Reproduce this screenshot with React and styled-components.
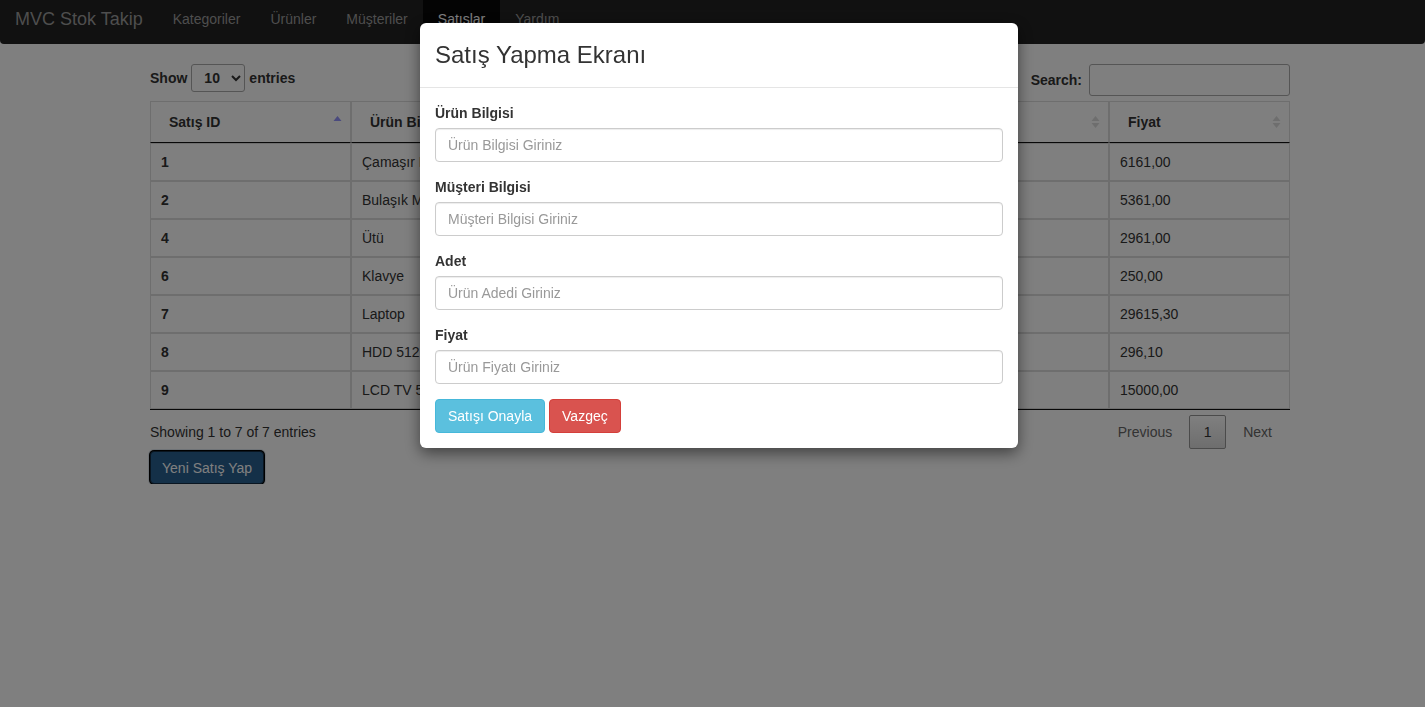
import React from "react";
import styled, {createGlobalStyle} from "styled-components";

const GlobalStyle = createGlobalStyle`
  * { box-sizing: border-box; }
  body {
    margin: 0;
    font-family: "Liberation Sans", Arial, sans-serif;
    font-size: 14px;
    line-height: 20px;
    color: #333;
    background: #fff;
  }
`;

const rows = [
  { id: 1, urun: "Çamaşır Makinesi", musteri: "Ahmet Yılmaz", adet: 1, fiyat: "6161,00" },
  { id: 2, urun: "Bulaşık Makinesi", musteri: "Mehmet Demir", adet: 1, fiyat: "5361,00" },
  { id: 4, urun: "Ütü", musteri: "Ayşe Kaya", adet: 1, fiyat: "2961,00" },
  { id: 6, urun: "Klavye", musteri: "Ali Çelik", adet: 1, fiyat: "250,00" },
  { id: 7, urun: "Laptop", musteri: "Zeynep Şahin", adet: 1, fiyat: "29615,30" },
  { id: 8, urun: "HDD 512 GB", musteri: "Can Öztürk", adet: 1, fiyat: "296,10" },
  { id: 9, urun: "LCD TV 55 inç", musteri: "Elif Aydın", adet: 1, fiyat: "15000,00" },
];

const columns = [
  { title: "Satış ID", width: 201, sort: "asc" },
  { title: "Ürün Bilgisi", width: 262, sort: "both" },
  { title: "Müşteri", width: 250, sort: "both" },
  { title: "Adet", width: 246, sort: "both" },
  { title: "Fiyat", width: 181, sort: "both" },
];

// Navbar
const Navbar = styled.nav`
  height: 44px;
  background: #222;
  border-radius: 0 0 4px 4px;
  display: flex;
  align-items: stretch;
  padding-left: 15px;
`;

const Brand = styled.a`
  font-size: 18px;
  color: #9d9d9d;
  display: flex;
  align-items: center;
  margin-right: 15px;
  padding-bottom: 6px;
`;

const NavLink = styled.a`
  color: ${(p) => (p.$active ? "#fff" : "#9d9d9d")};
  background: ${(p) => (p.$active ? "#080808" : "transparent")};
  padding: 0 15px 6px;
  display: flex;
  align-items: center;
`;

// Page body
const Main = styled.main`
  width: 1140px;
  margin-left: 150px;
  padding-top: 20px;
`;

const TopBar = styled.div`
  display: flex;
  justify-content: space-between;
  align-items: flex-start;
  height: 37px;
  font-weight: bold;
`;

const Label = styled.label`
  display: flex;
  align-items: center;
  gap: 4px;
`;

const Select = styled.select`
  width: 54px;
  height: 28px;
  font-family: inherit;
  font-size: 14px;
  font-weight: bold;
  padding: 0 4px 0 8px;
  border: 1px solid #aaa;
  border-radius: 3px;
  background: #fff;
  color: #333;
`;

const SearchInput = styled.input`
  width: 201px;
  height: 32px;
  border: 1px solid #aaa;
  border-radius: 3px;
  margin-left: 3px;
`;

const Table = styled.table`
  width: 1140px;
  table-layout: fixed;
  border-collapse: separate;
  border-spacing: 0;
  border-bottom: 1px solid #111;
`;

const Th = styled.th`
  text-align: left;
  padding: 10px 30px 10px 18px;
  border: 1px solid #ddd;
  border-bottom: 1px solid #111;
  position: relative;
  white-space: nowrap;
  overflow: hidden;
`;

const SortIcon = styled.svg`
  position: absolute;
  right: 8px;
  top: 13px;
`;

const Td = styled.td`
  padding: 8px 10px;
  border: 1px solid #ddd;
  font-weight: ${(p) => (p.$bold ? "bold" : "normal")};
  white-space: nowrap;
  overflow: hidden;
`;

const Footer = styled.div`
  display: flex;
  justify-content: space-between;
  align-items: center;
  margin-top: 4px;
`;

const Pager = styled.div`
  display: flex;
  align-items: center;
  padding-right: 1px;
`;

const PageLink = styled.a`
  color: ${(p) => (p.$current ? "#333" : "#666")};
  border: 1px solid ${(p) => (p.$current ? "#979797" : "transparent")};
  border-radius: 2px;
  background: ${(p) => (p.$current ? "linear-gradient(#fff, #dcdcdc)" : "transparent")};
  text-align: center;
  width: ${(p) => (p.$current ? "37px" : "auto")};
  padding: ${(p) => (p.$current ? "6px 0" : "7px 16px")};
`;

const NewButton = styled.button`
  margin-top: 1px;
  font-family: inherit;
  font-size: 14px;
  color: #fff;
  background: #286090;
  border: 1px solid #122b40;
  border-radius: 4px;
  padding: 6px 11px;
  height: 33px;
  box-shadow: 0 0 0 1px #000, 0 0 0 2px #dfe6ee;
`;

// Modal
const Backdrop = styled.div`
  position: fixed;
  inset: 0;
  background: rgba(0, 0, 0, 0.5);
`;

const Modal = styled.div`
  position: fixed;
  top: 23px;
  left: 420px;
  width: 598px;
  background: #fff;
  border-radius: 6px;
  box-shadow: 0 5px 15px rgba(0, 0, 0, 0.5);
`;

const ModalHeader = styled.div`
  padding: 15px;
  height: 65px;
  border-bottom: 1px solid #e5e5e5;
  display: flex;
  align-items: center;
`;

const ModalTitle = styled.h3`
  margin: 0;
  font-size: 24px;
  font-weight: 500;
  line-height: 1.1;
  color: #333;
`;

const ModalBody = styled.div`
  padding: 15px;
`;

const FormGroup = styled.div`
  margin-bottom: 15px;
`;

const FieldLabel = styled.label`
  display: block;
  font-weight: bold;
  margin-bottom: 5px;
`;

const Input = styled.input`
  display: block;
  width: 100%;
  height: 34px;
  padding: 6px 12px;
  font-family: inherit;
  font-size: 14px;
  border: 1px solid #ccc;
  border-radius: 4px;
  box-shadow: inset 0 1px 1px rgba(0, 0, 0, 0.075);
  &::placeholder { color: #999; }
`;

const Btn = styled.button`
  font-family: inherit;
  font-size: 14px;
  color: #fff;
  height: 34px;
  padding: 6px 12px;
  border-radius: 4px;
  border: 1px solid ${(p) => (p.$variant === "danger" ? "#d43f3a" : "#46b8da")};
  background: ${(p) => (p.$variant === "danger" ? "#d9534f" : "#5bc0de")};
  margin-right: 4px;
`;

const Sort = ({ type }) =>
  type === "asc" ? (
    <SortIcon width="9" height="14" viewBox="0 0 9 14">
      <path d="M0.5 6 L4.5 1 L8.5 6 Z" fill="#9494fc" />
    </SortIcon>
  ) : (
    <SortIcon width="9" height="14" viewBox="0 0 9 14">
      <path d="M0.5 6 L4.5 1 L8.5 6 Z" fill="#dcdcdc" />
      <path d="M0.5 8 L4.5 13 L8.5 8 Z" fill="#dcdcdc" />
    </SortIcon>
  );

const fields = [
  { label: "Ürün Bilgisi", ph: "Ürün Bilgisi Giriniz" },
  { label: "Müşteri Bilgisi", ph: "Müşteri Bilgisi Giriniz" },
  { label: "Adet", ph: "Ürün Adedi Giriniz" },
  { label: "Fiyat", ph: "Ürün Fiyatı Giriniz" },
];

export default function App() {
  return (
    <>
      <GlobalStyle />
      <Navbar>
        <Brand>MVC Stok Takip</Brand>
        <NavLink>Kategoriler</NavLink>
        <NavLink>Ürünler</NavLink>
        <NavLink>Müşteriler</NavLink>
        <NavLink $active>Satışlar</NavLink>
        <NavLink>Yardım</NavLink>
      </Navbar>
      <Main>
        <TopBar>
          <Label>
            Show
            <Select defaultValue="10">
              <option>10</option>
              <option>25</option>
              <option>50</option>
            </Select>
            entries
          </Label>
          <Label>
            Search:
            <SearchInput />
          </Label>
        </TopBar>
        <Table>
          <colgroup>
            {columns.map((c) => (
              <col key={c.title} style={{ width: c.width }} />
            ))}
          </colgroup>
          <thead>
            <tr>
              {columns.map((c) => (
                <Th key={c.title}>
                  {c.title}
                  <Sort type={c.sort} />
                </Th>
              ))}
            </tr>
          </thead>
          <tbody>
            {rows.map((r) => (
              <tr key={r.id}>
                <Td $bold>{r.id}</Td>
                <Td>{r.urun}</Td>
                <Td>{r.musteri}</Td>
                <Td>{r.adet}</Td>
                <Td>{r.fiyat}</Td>
              </tr>
            ))}
          </tbody>
        </Table>
        <Footer>
          <span>Showing 1 to 7 of 7 entries</span>
          <Pager>
            <PageLink>Previous</PageLink>
            <PageLink $current>1</PageLink>
            <PageLink>Next</PageLink>
          </Pager>
        </Footer>
        <NewButton>Yeni Satış Yap</NewButton>
      </Main>

      <Backdrop />
      <Modal>
        <ModalHeader>
          <ModalTitle>Satış Yapma Ekranı</ModalTitle>
        </ModalHeader>
        <ModalBody>
          {fields.map((f) => (
            <FormGroup key={f.label}>
              <FieldLabel>{f.label}</FieldLabel>
              <Input placeholder={f.ph} />
            </FormGroup>
          ))}
          <div>
            <Btn $variant="info">Satışı Onayla</Btn>
            <Btn $variant="danger">Vazgeç</Btn>
          </div>
        </ModalBody>
      </Modal>
    </>
  );
}
